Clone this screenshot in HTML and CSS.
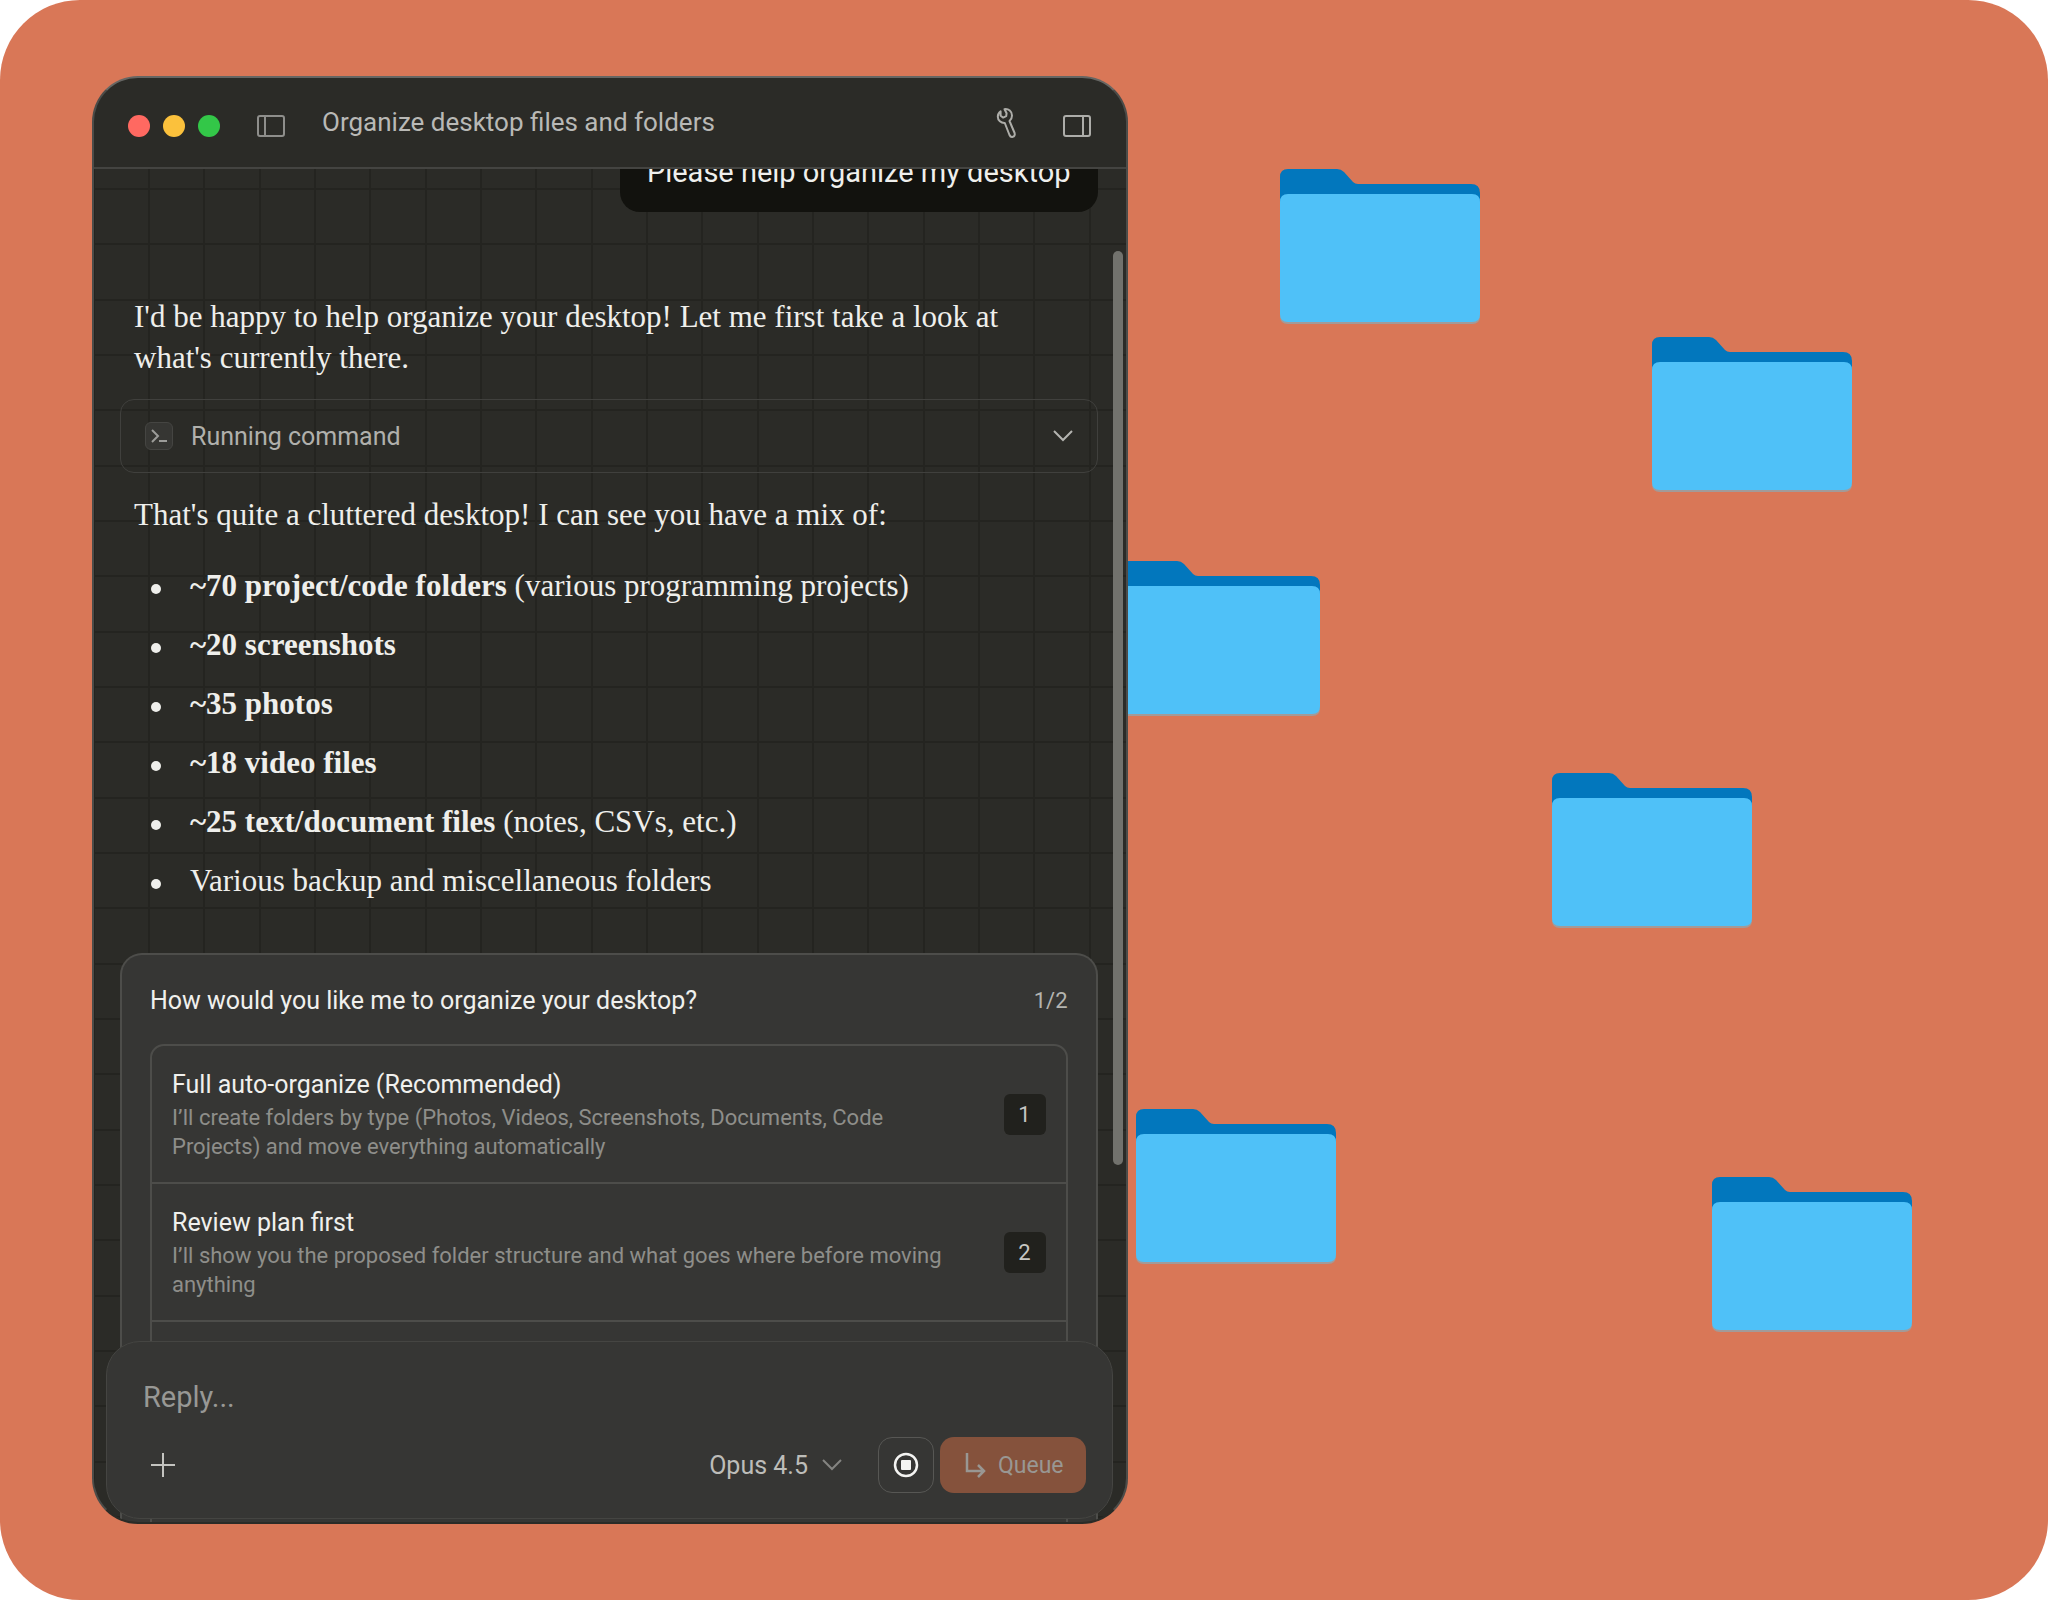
FILE: index.html
```
<!DOCTYPE html>
<html lang="en">
<head>
    <meta charset="UTF-8">
    <meta name="viewport" content="width=device-width, initial-scale=1.0">
    <title>Organize desktop files and folders</title>
    <link rel="stylesheet" href="styles.css">
</head>
<body>
    <!-- one folder drawing, reused all over the desktop -->
    <svg class="defs" aria-hidden="true">
        <symbol id="folder" viewBox="0 0 200 155">
            <path fill="#0277bd" d="M0 34V8Q0 0 8 0H57Q61 0 64 3L73 13Q75 15 78 15H191Q200 15 200 24V34Z"/>
            <path fill="#a39a98" d="M0 34H200V147Q200 155 192 155H8Q0 155 0 147Z"/>
            <path fill="#4fc1f8" d="M0 33Q0 25 8 25H192Q200 25 200 33V145Q200 153 192 153H8Q0 153 0 145Z"/>
        </symbol>
    </svg>

    <div class="desktop">
        <svg class="folder folder1"><use href="#folder"/></svg>
        <svg class="folder folder2"><use href="#folder"/></svg>
        <svg class="folder folder3"><use href="#folder"/></svg>
        <svg class="folder folder4"><use href="#folder"/></svg>
        <svg class="folder folder5"><use href="#folder"/></svg>
        <svg class="folder folder6"><use href="#folder"/></svg>

        <main class="window">
            <header class="titlebar">
                <div class="lights">
                    <span class="light red"></span>
                    <span class="light yellow"></span>
                    <span class="light green"></span>
                </div>
                <button class="icon-btn" aria-label="Toggle sidebar">
                    <svg width="30" height="24" viewBox="0 0 30 24" fill="none" stroke="#8e8e8b" stroke-width="2">
                        <rect x="2" y="2" width="26" height="20" rx="2"/>
                        <path d="M9 2V22"/>
                    </svg>
                </button>
                <h1 class="title">Organize desktop files and folders</h1>
                <div class="actions">
                    <button class="icon-btn" aria-label="Tools">
                        <svg width="22" height="38" viewBox="0 0 22 38" fill="none" stroke="#adada9" stroke-width="2" stroke-linejoin="round" stroke-linecap="round">
                            <path d="M8.500 2.200C12.500 1.500 16 4.500 16 8.500C16 10.800 15 12.800 13.500 14L18.600 26C19.200 28 18.300 29.400 16.800 29.800C15.300 30.200 14.100 29.400 13.500 28L8.800 16C5 16.200 1.800 13.500 1.800 9.800C1.800 7.500 2.800 5.600 4.600 4.400V8.800L7.200 10.600L10.200 9.200L10.600 6.200Z"/>
                        </svg>
                    </button>
                    <button class="icon-btn" aria-label="Toggle side panel">
                        <svg width="30" height="24" viewBox="0 0 30 24" fill="none" stroke="#adada9" stroke-width="2">
                            <rect x="2" y="2" width="26" height="20" rx="2"/>
                            <path d="M21 2V22"/>
                        </svg>
                    </button>
                </div>
            </header>

            <section class="chat">
                <p class="bubble">Please help organize my desktop</p>

                <p class="message">I'd be happy to help organize your desktop! Let me first take a look at what's currently there.</p>

                <button class="command">
                    <span class="terminal">
                        <svg width="20" height="18" viewBox="0 0 20 18" fill="none" stroke="#9c9c99" stroke-width="2">
                            <path d="M3 3L9 9L3 15M10 14H18"/>
                        </svg>
                    </span>
                    <span class="command-name">Running command</span>
                    <svg width="20" height="14" viewBox="0 0 20 14" fill="none" stroke="#b4b4b0" stroke-width="2">
                        <path d="M1 2L10 11L19 2"/>
                    </svg>
                </button>

                <p class="message">That's quite a cluttered desktop! I can see you have a mix of:</p>
                <ul class="list">
                    <li><strong>~70 project/code folders</strong> (various programming projects)</li>
                    <li><strong>~20 screenshots</strong></li>
                    <li><strong>~35 photos</strong></li>
                    <li><strong>~18 video files</strong></li>
                    <li><strong>~25 text/document files</strong> (notes, CSVs, etc.)</li>
                    <li>Various backup and miscellaneous folders</li>
                </ul>

                <div class="card">
                    <div class="card-head">
                        <h2 class="question">How would you like me to organize your desktop?</h2>
                        <span class="step">1/2</span>
                    </div>
                    <div class="options">
                        <button class="option">
                            <span class="option-text">
                                <span class="option-name">Full auto-organize (Recommended)</span>
                                <span class="option-desc">I’ll create folders by type (Photos, Videos, Screenshots, Documents, Code Projects) and move everything automatically</span>
                            </span>
                            <kbd class="key">1</kbd>
                        </button>
                        <button class="option">
                            <span class="option-text">
                                <span class="option-name">Review plan first</span>
                                <span class="option-desc">I’ll show you the proposed folder structure and what goes where before moving anything</span>
                            </span>
                            <kbd class="key">2</kbd>
                        </button>
                    </div>
                </div>
            </section>

            <div class="scrollbar"></div>

            <form class="composer">
                <input class="reply" type="text" placeholder="Reply..." aria-label="Reply">
                <div class="tools">
                    <button class="icon-btn add" type="button" aria-label="Add">
                        <svg width="24" height="24" viewBox="0 0 24 24" fill="none" stroke="#c4c4c0" stroke-width="2">
                            <path d="M12 0V24M0 12H24"/>
                        </svg>
                    </button>
                    <button class="model" type="button">
                        Opus 4.5
                        <svg width="20" height="14" viewBox="0 0 20 14" fill="none" stroke="#848481" stroke-width="2">
                            <path d="M1 2L10 11L19 2"/>
                        </svg>
                    </button>
                    <button class="stop" type="button" aria-label="Stop">
                        <svg width="26" height="26" viewBox="0 0 26 26">
                            <circle cx="13" cy="13" r="11" fill="none" stroke="#f4f4f2" stroke-width="2.500"/>
                            <rect x="8" y="8" width="10" height="10" rx="1" fill="#f4f4f2"/>
                        </svg>
                    </button>
                    <button class="queue" type="button">
                        <svg width="22" height="26" viewBox="0 0 22 26" fill="none" stroke="currentColor" stroke-width="2.500">
                            <path d="M3 1V19H20M14 13L20 19L14 25"/>
                        </svg>
                        Queue
                    </button>
                </div>
            </form>
        </main>
    </div>
</body>
</html>
```

FILE: styles.css
```
* {
    box-sizing: border-box;
    margin: 0;
    padding: 0;
}

body {
    background-color: #fff;
    font-family: Roboto, "Liberation Sans", sans-serif;
    font-size: 25px;
}
button, input {
    border: 0;
    background: none;
    color: inherit;
    font: inherit;
    text-align: left;
}
svg {
    display: block;
    flex: none;
}

.defs {
    position: absolute;
    width: 0;
    height: 0;
}

.desktop {
    position: relative;
    display: grid;
    grid-template-columns: 5fr 4fr;
    height: 100vh;
    padding: 76px 92px;
    background-color: #d97757;
    border-radius: 80px;
    overflow: hidden;
}

/* folders lie freely on the desktop */
.folder {
    position: absolute;
    width: 200px;
    height: 155px;
}
.folder1 { left: 1280px; top: 169px; }
.folder2 { left: 1652px; top: 337px; }
.folder3 { left: 1120px; top: 561px; }
.folder4 { left: 1552px; top: 773px; }
.folder5 { left: 1136px; top: 1109px; }
.folder6 { left: 1712px; top: 1177px; }

/* window */
.window {
    position: relative;
    display: flex;
    flex-direction: column;
    min-height: 0;
    background-color: #2b2b27;
    border: 2px solid #4c4c49;
    border-top-color: #666663;
    border-bottom-color: #2b2b27;
    border-radius: 46px;
    overflow: hidden;
}

.titlebar {
    display: flex;
    align-items: center;
    gap: 36px;
    height: 91px;
    padding: 6px 34px 0;
    border-bottom: 2px solid #444441;
}
.lights {
    display: flex;
    gap: 13px;
}
.light {
    width: 22px;
    height: 22px;
    border-radius: 50%;
}
.red { background-color: #ff6961; }
.yellow { background-color: #fbc13c; }
.green { background-color: #33c748; }
.title {
    flex: 1;
    padding-bottom: 8px;
    color: #b9b9b6;
    font-size: 26px;
    font-weight: 400;
}
.actions {
    display: flex;
    align-items: center;
    gap: 44px;
}

/* chat */
.chat {
    flex: 1;
    display: flex;
    flex-direction: column;
    min-height: 0;
    padding: 0 28px 0 26px;
    overflow: hidden;
    /* 3 grid cells per tile */
    background-image:
        linear-gradient(90deg, #242420 2px, transparent 2px 55px, #242420 55px 57px, transparent 57px 111px, #242420 111px 113px, transparent 113px),
        linear-gradient(#242420 2px, transparent 2px 55px, #242420 55px 57px, transparent 57px 111px, #242420 111px 113px, transparent 113px);
    background-size: 166px 166px;
    background-position: 54px 19px;
}
.chat > * {
    flex-shrink: 0;
}
.bubble {
    align-self: flex-end;
    margin-top: -25px;
    padding: 8px 27px 20px;
    background-color: #12120e;
    border-radius: 20px;
    color: #efefec;
    font-size: 29px;
    line-height: 40px;
}
.message, .list {
    color: #efefec;
    font-family: "Liberation Serif", serif;
    font-size: 31px;
    line-height: 41px;
}
.message {
    padding: 0 50px 0 14px;
}
.bubble + .message {
    margin-top: 84px;
}

.command {
    display: flex;
    align-items: center;
    gap: 18px;
    height: 74px;
    margin: 21px 0;
    padding: 0 24px;
    border: 1px solid #40403d;
    border-radius: 14px;
    color: #b0b0ac;
}
.terminal {
    display: flex;
    align-items: center;
    justify-content: center;
    width: 28px;
    height: 28px;
    background-color: #363633;
    border: 1px solid #454542;
    border-radius: 6px;
}
.command-name {
    flex: 1;
}

.list {
    display: flex;
    flex-direction: column;
    gap: 18px;
    margin: 30px 0 52px;
    padding-left: 31px;
    list-style: none;
}
.list li::before {
    content: "";
    display: inline-block;
    width: 10px;
    height: 10px;
    margin-right: 29px;
    border-radius: 50%;
    background-color: #efefec;
    vertical-align: middle;
}

/* question card */
.card {
    flex: 1 0 auto;
    padding: 28px;
    background-color: #363634;
    border: 2px solid #4d4d4a;
    border-bottom: 0;
    border-radius: 22px 22px 0 0;
}
.card-head {
    display: flex;
    align-items: center;
    justify-content: space-between;
    margin-bottom: 26px;
}
.question {
    color: #f0f0ed;
    font-size: 25px;
    font-weight: 400;
    line-height: 35px;
}
.step {
    color: #b4b4b0;
    font-size: 22px;
}
.options {
    height: 520px;
    border: 2px solid #4d4d4a;
    border-radius: 14px;
}
.option {
    display: flex;
    align-items: center;
    justify-content: space-between;
    gap: 40px;
    width: 100%;
    padding: 21px 20px;
    border-bottom: 2px solid #4d4d4a;
}
.option-text {
    display: flex;
    flex-direction: column;
}
.option-name {
    color: #f0f0ed;
    line-height: 36px;
}
.option-desc {
    color: #8e8e8a;
    font-size: 22px;
    line-height: 29px;
}
.key {
    flex: none;
    width: 42px;
    border-radius: 6px;
    background-color: #21211d;
    color: #c6c6c2;
    font-family: inherit;
    font-size: 22px;
    line-height: 41px;
    text-align: center;
}

.scrollbar {
    position: absolute;
    top: 173px;
    right: 3px;
    width: 10px;
    height: 914px;
    background-color: #72726d;
    border-radius: 5px;
}

/* reply box floats over the end of the chat */
.composer {
    position: absolute;
    left: 12px;
    right: 13px;
    bottom: 3px;
    padding: 30px 26px 25px 36px;
    background-color: #363634;
    border: 1px solid #454542;
    border-radius: 34px;
}
.reply {
    display: block;
    width: 100%;
    height: 50px;
    font-size: 29px;
    outline: none;
}
.reply::placeholder {
    color: #989895;
}
.tools {
    display: flex;
    align-items: center;
    margin-top: 15px;
}
.add {
    margin-left: 8px;
}
.model {
    display: flex;
    align-items: center;
    gap: 14px;
    margin-left: auto;
    margin-right: 36px;
    color: #bdbdb9;
}
.stop {
    display: flex;
    align-items: center;
    justify-content: center;
    width: 56px;
    height: 56px;
    border: 1px solid #575754;
    border-radius: 14px;
}
.queue {
    display: flex;
    align-items: center;
    gap: 12px;
    height: 56px;
    margin-left: 6px;
    padding: 0 22px 0 24px;
    background-color: #85523c;
    border-radius: 14px;
    color: #999793;
    font-size: 23px;
}
```
